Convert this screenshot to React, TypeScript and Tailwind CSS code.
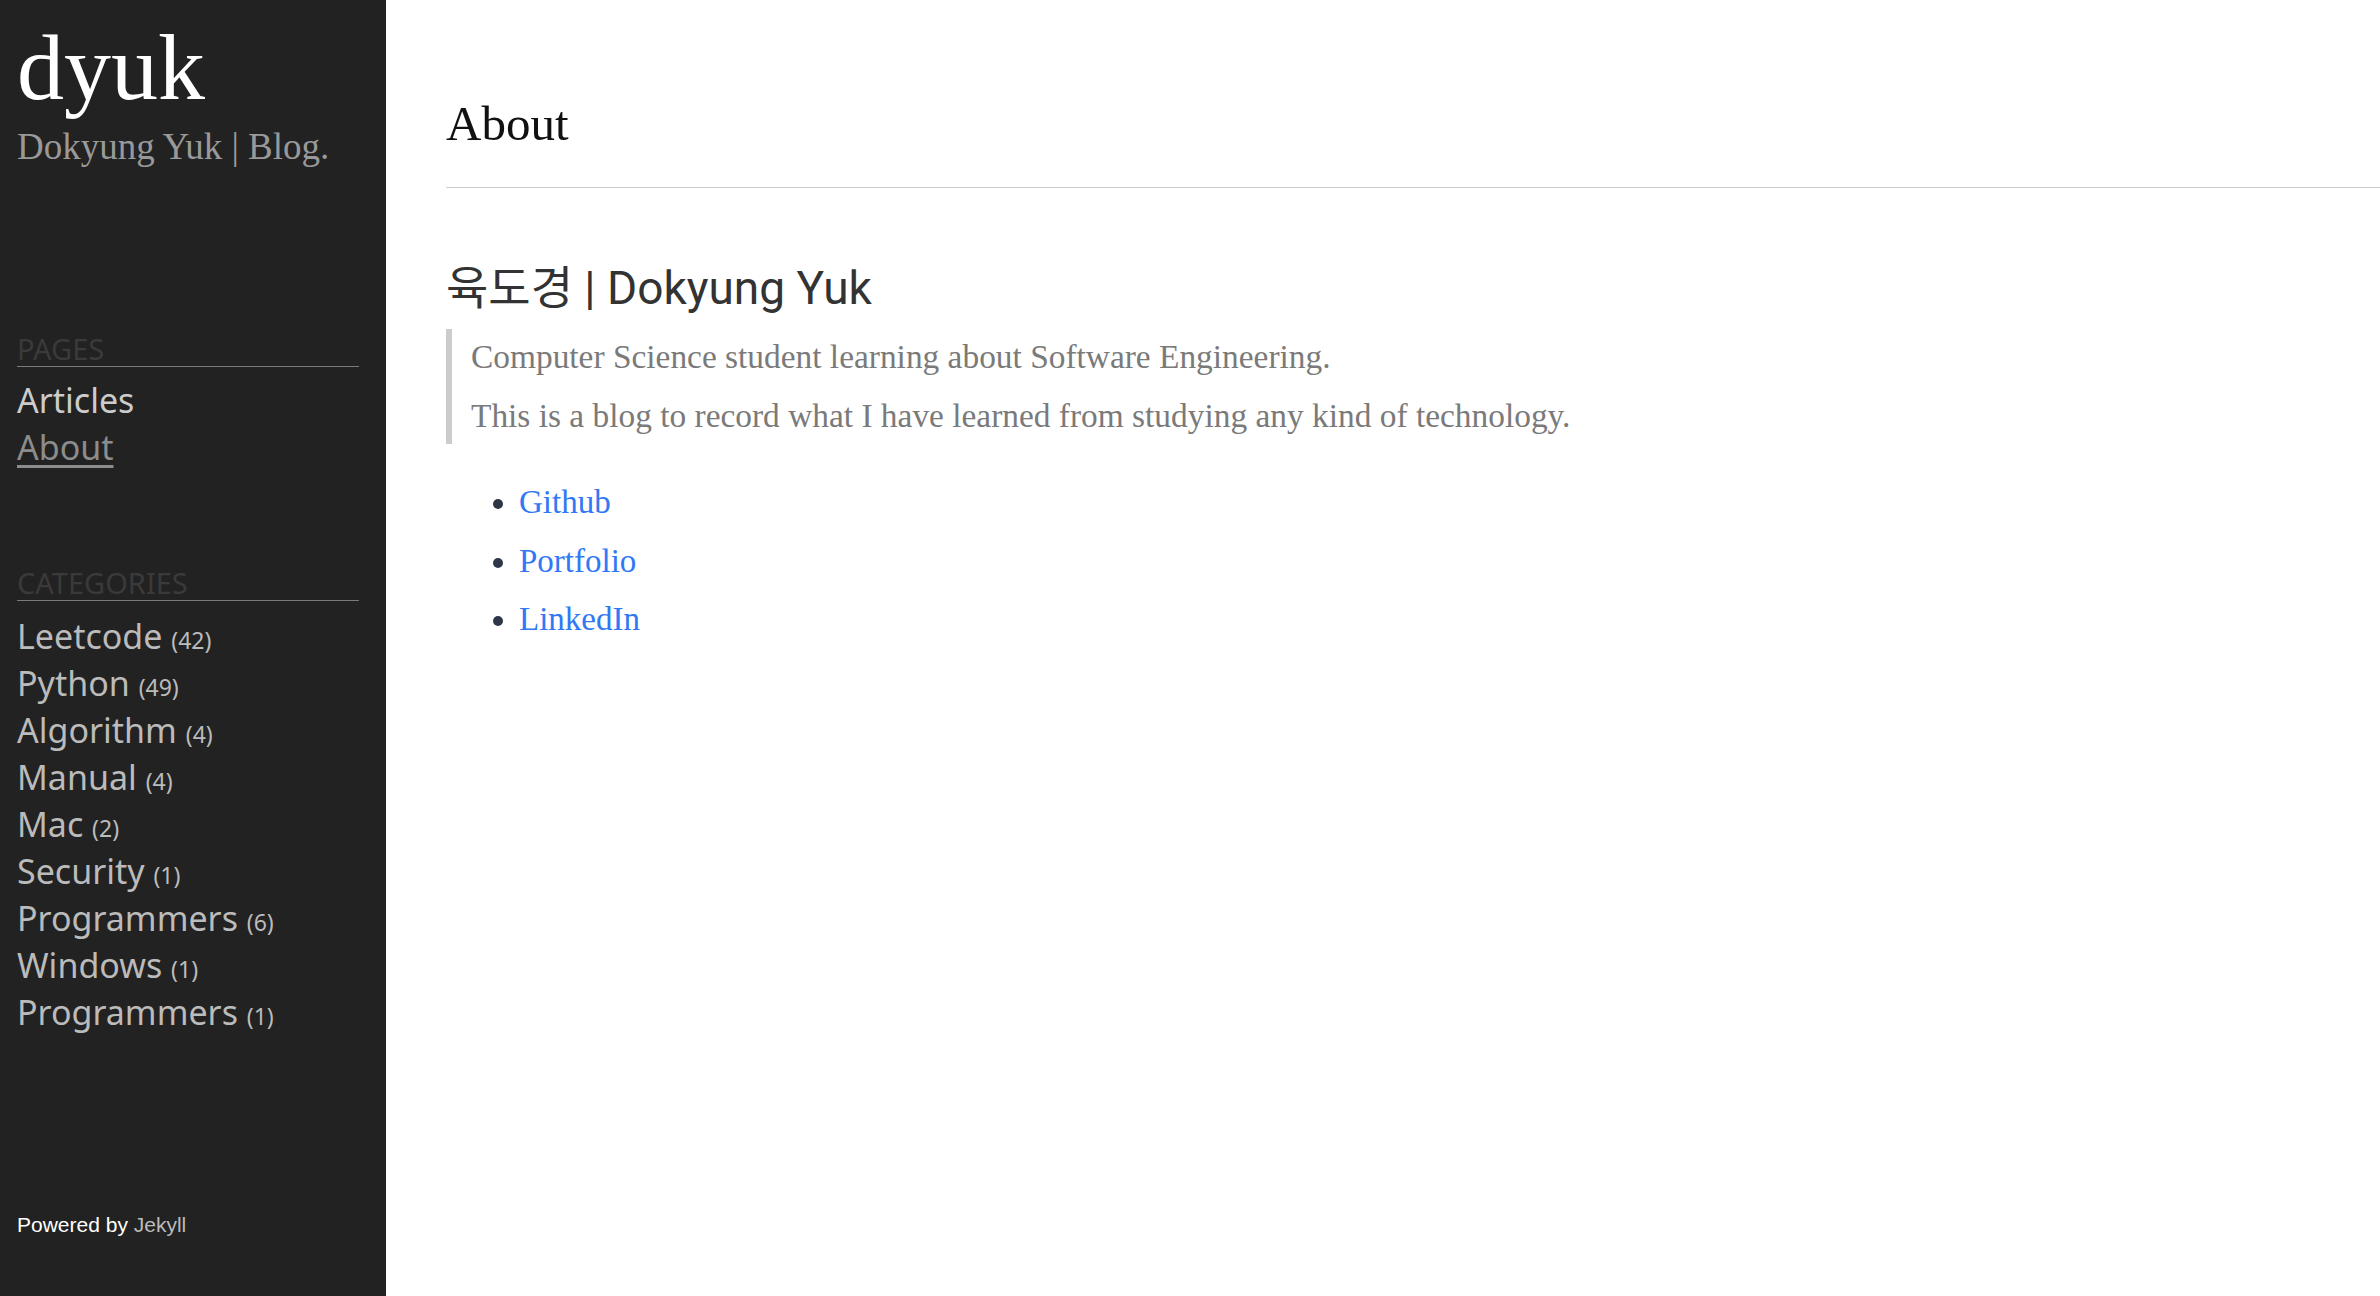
const pages = [
  { name: "Articles", active: false },
  { name: "About", active: true },
];

const categories = [
  { name: "Leetcode", count: 42 },
  { name: "Python", count: 49 },
  { name: "Algorithm", count: 4 },
  { name: "Manual", count: 4 },
  { name: "Mac", count: 2 },
  { name: "Security", count: 1 },
  { name: "Programmers", count: 6 },
  { name: "Windows", count: 1 },
  { name: "Programmers", count: 1 },
];

const links = ["Github", "Portfolio", "LinkedIn"];

function SectionLabel({ label }: { label: string }) {
  return (
    <div className="text-[29px] leading-[35px] text-[#3a3a3a] border-b border-[#7a7a7a] font-['Noto_Sans',sans-serif]">
      {label}
    </div>
  );
}

export default function App() {
  return (
    <div className="flex min-h-screen w-full bg-white">
      {/* sidebar */}
      <aside className="w-[386px] shrink-0 h-screen bg-[#222222] pl-[17px] flex flex-col">
        <div className="w-[342px]">
          <h1 className="mt-[20px] text-[94px] leading-[94px] text-white font-['Liberation_Serif',serif]">
            dyuk
          </h1>
          <p className="mt-[11px] text-[37px] leading-[44px] text-[#999999] font-['Liberation_Serif',serif]">
            Dokyung Yuk | Blog.
          </p>

          <nav className="mt-[162px]">
            <SectionLabel label="PAGES" />
            <ul className="mt-[10px] font-['Noto_Sans',sans-serif]">
              {pages.map((p) => (
                <li
                  key={p.name}
                  className={
                    p.active
                      ? "text-[34px] leading-[47px] text-[#8c8c8c] underline underline-offset-[5px]"
                      : "text-[34px] leading-[47px] text-[#cccccc]"
                  }
                >
                  {p.name}
                </li>
              ))}
            </ul>
          </nav>

          <nav className="mt-[94px]">
            <SectionLabel label="CATEGORIES" />
            <ul className="mt-[12px] font-['Noto_Sans',sans-serif] text-[#bbbbbb]">
              {categories.map((c, i) => (
                <li key={i} className="text-[34px] leading-[47px]">
                  {c.name} <span className="text-[23px] leading-none">({c.count})</span>
                </li>
              ))}
            </ul>
          </nav>
        </div>

        <p className="mt-auto pb-[59px] text-[21px] leading-[24px] text-white font-['Liberation_Sans',Arial,sans-serif]">
          Powered by <span className="text-[#bbbbbb]">Jekyll</span>
        </p>
      </aside>

      {/* main */}
      <main className="flex-1 pl-[60px] pt-[93px]">
        <h1 className="text-[49px] leading-[61px] pb-[33px] text-[#111111] border-b border-[#cccccc] font-['Liberation_Serif',serif]">
          About
        </h1>

        <h2 className="mt-[72px] text-[46px] leading-[56px] text-[#333333] font-['Roboto','Noto_Sans_CJK_KR',sans-serif]">
          육도경 | Dokyung Yuk
        </h2>

        <blockquote className="mt-[13px] border-l-[6px] border-[#cccccc] pl-[19px] py-[6px] text-[33.4px] leading-[44px] text-[#7a7a7a] font-['Liberation_Serif',serif]">
          <p>Computer Science student learning about Software Engineering.</p>
          <p className="mt-[15px]">
            This is a blog to record what I have learned from studying any kind of technology.
          </p>
        </blockquote>

        <ul className="mt-[29px] pl-[73px] list-disc marker:text-[#2d3748] text-[33px] leading-[58.5px] font-['Liberation_Serif',serif]">
          {links.map((l) => (
            <li key={l}>
              <a href="#" className="text-[#3178f6]">
                {l}
              </a>
            </li>
          ))}
        </ul>
      </main>
    </div>
  );
}
